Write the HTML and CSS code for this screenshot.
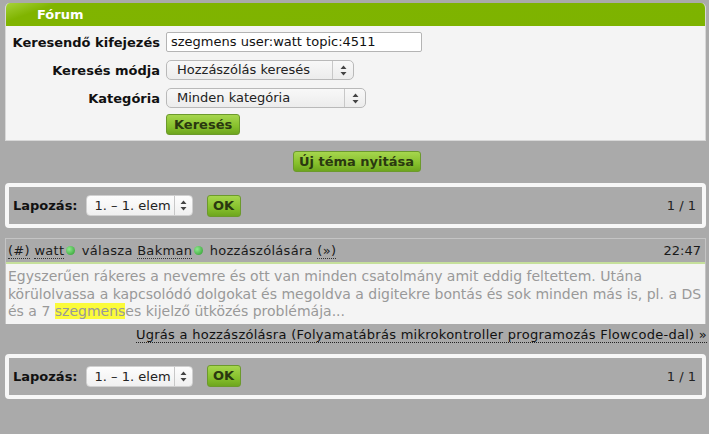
FILE: index.html
```html
<!DOCTYPE html>
<html lang="hu">
<head>
<meta charset="utf-8">
<title>Fórum</title>
<link rel="stylesheet" href="styles.css">
</head>
<body>
<div class="forum">
  <div class="forum-head">Fórum</div>
  <div class="search">
    <label class="lbl">Keresendő kifejezés</label>
    <div class="field"><div class="input">szegmens user:watt topic:4511</div></div>
    <label class="lbl">Keresés módja</label>
    <div class="field"><div class="select sel1"><span class="sel-text">Hozzászólás keresés</span><span class="sel-arrow"><svg width="7" height="11" viewBox="0 0 7 11"><path d="M3.5 0.5 L6.5 4 L0.5 4 Z M0.5 7 L6.5 7 L3.5 10.5 Z" fill="#444"/></svg></span></div></div>
    <label class="lbl">Kategória</label>
    <div class="field"><div class="select sel2"><span class="sel-text">Minden kategória</span><span class="sel-arrow"><svg width="7" height="11" viewBox="0 0 7 11"><path d="M3.5 0.5 L6.5 4 L0.5 4 Z M0.5 7 L6.5 7 L3.5 10.5 Z" fill="#444"/></svg></span></div></div>
    <div></div>
    <div class="field btn-row"><span class="btn">Keresés</span></div>
  </div>
</div>

<div class="actions"><span class="btn btn-new">Új téma nyitása</span></div>

<div class="pager">
  <div class="pager-left">
    <b class="pager-lbl">Lapozás:</b>
    <div class="select psel"><span class="sel-text">1. – 1. elem</span><span class="sel-arrow"><svg width="7" height="11" viewBox="0 0 7 11"><path d="M3.5 0.5 L6.5 4 L0.5 4 Z M0.5 7 L6.5 7 L3.5 10.5 Z" fill="#444"/></svg></span></div>
    <span class="btn btn-ok">OK</span>
  </div>
  <div class="pager-right">1 / 1</div>
</div>

<div class="post">
  <div class="post-head">
    <div class="post-meta"><span class="u">(#)</span> <span class="u">watt</span><span class="dot"></span> válasza <span class="u">Bakman</span><span class="dot"></span> hozzászólására <span class="u">(»)</span></div>
    <div class="post-time">22:47</div>
  </div>
  <div class="post-body">Egyszerűen rákeres a nevemre és ott van minden csatolmány amit eddig feltettem. Utána körülolvassa a kapcsolódó dolgokat és megoldva a digitekre bontás és sok minden más is, pl. a DS és a 7 <span class="hl">szegmens</span>es kijelző ütközés problémája...</div>
</div>
<div class="jump"><span class="jump-link">Ugrás a hozzászólásra (Folyamatábrás mikrokontroller programozás Flowcode-dal) »</span></div>

<div class="pager pager2">
  <div class="pager-left">
    <b class="pager-lbl">Lapozás:</b>
    <div class="select psel"><span class="sel-text">1. – 1. elem</span><span class="sel-arrow"><svg width="7" height="11" viewBox="0 0 7 11"><path d="M3.5 0.5 L6.5 4 L0.5 4 Z M0.5 7 L6.5 7 L3.5 10.5 Z" fill="#444"/></svg></span></div>
    <span class="btn btn-ok">OK</span>
  </div>
  <div class="pager-right">1 / 1</div>
</div>
</body>
</html>
```

FILE: styles.css
```css
html, body {
  margin: 0;
  padding: 0;
}
body {
  background: #aaaaaa;
  font-family: "DejaVu Sans", Verdana, sans-serif;
  font-size: 13px;
  color: #222;
  width: 709px;
  height: 434px;
  overflow: hidden;
}
.forum {
  margin: 3px 3px 0 5px;
  background: #f4f4f4;
  border: 1px solid #d8d8d8;
  border-top: none;
  border-radius: 5px 5px 0 0;
  overflow: hidden;
}
.forum-head {
  height: 23px;
  line-height: 23px;
  background: linear-gradient(160deg, #a6d23a 0px, #80b400 18px, #7db300 100%);
  color: #fff;
  font-weight: bold;
  font-size: 13px;
  padding-left: 31px;
}
.search {
  display: grid;
  grid-template-columns: 154px auto;
  column-gap: 6px;
  row-gap: 8px;
  padding: 6px 0 5px 0;
  align-items: center;
}
.lbl {
  text-align: right;
  font-weight: bold;
  color: #111;
  white-space: nowrap;
}
.field {
  display: flex;
}
.btn-row {
  margin-top: -2px;
}
.input {
  box-sizing: border-box;
  width: 256px;
  height: 20px;
  line-height: 18px;
  padding-left: 4px;
  background: #fff;
  border: 1px solid #b4b4b4;
  border-radius: 2px;
  color: #111;
}
.select {
  box-sizing: border-box;
  height: 20px;
  display: flex;
  align-items: stretch;
  background: linear-gradient(#f8f8f8, #ececec);
  border: 1px solid #b9b9b9;
  border-radius: 5px;
  color: #222;
}
.sel-text {
  flex: 1;
  padding-left: 10px;
  line-height: 18px;
  white-space: nowrap;
}
.sel-arrow {
  width: 20px;
  border-left: 1px solid #c8c8c8;
  display: flex;
  align-items: center;
  justify-content: center;
}
.sel1 { width: 188px; }
.sel2 { width: 200px; }
.btn {
  display: inline-block;
  box-sizing: border-box;
  height: 21px;
  line-height: 19px;
  padding: 0 7px;
  background: linear-gradient(#a6d64e, #86c02c 60%, #6ea61e);
  border: 1px solid #6c9a2c;
  border-radius: 3px;
  color: #2a3810;
  font-weight: bold;
  white-space: nowrap;
}
.actions {
  text-align: center;
  padding: 10px 0 11px 4px;
  height: 21px;
}
.btn-new {
  width: 128px;
  text-align: center;
  padding: 0;
}
.pager {
  margin: 0 3px 0 5px;
  height: 45px;
  box-sizing: border-box;
  border: 4px solid #f7f7f7;
  border-radius: 4px;
  display: flex;
  align-items: center;
  justify-content: space-between;
  padding: 0 6px 0 4px;
}
.pager-left {
  display: flex;
  align-items: center;
}
.pager-lbl {
  color: #111;
  margin-right: 8px;
}
.psel {
  width: 107px;
  height: 21px;
  border: 1px solid #d0d0d0;
  background: linear-gradient(#fdfdfd, #f0f0f0);
  border-radius: 4px;
}
.psel .sel-text {
  padding-left: 8px;
  line-height: 19px;
}
.psel .sel-arrow {
  width: 17px;
}
.btn-ok {
  margin-left: 14px;
  width: 34px;
  height: 22px;
  padding: 0;
  text-align: center;
  line-height: 20px;
}
.pager-right {
  color: #222;
}
.post {
  margin: 10px 3px 0 5px;
  border: 1px solid #c4c4c4;
  border-bottom: none;
}
.post-head {
  height: 23px;
  display: flex;
  align-items: center;
  justify-content: space-between;
  padding: 0 4px 0 2px;
  border-bottom: 2px solid #c6e09c;
  color: #1a1a1a;
}
.post-meta {
  white-space: nowrap;
  letter-spacing: 0.3px;
}
.u {
  border-bottom: 1px dotted #333;
}
.dot {
  display: inline-block;
  width: 9px;
  height: 9px;
  border-radius: 50%;
  background: radial-gradient(circle at 35% 35%, #8ee88e, #2a9a2a);
  margin: 0 2px 0 2px;
  vertical-align: 0px;
}
.post-body {
  background: #f4f4f4;
  color: #999;
  font-size: 14px;
  line-height: 17.5px;
  padding: 4px 0 3px 2px;
}
.hl {
  background: #fbfb3a;
}
.jump {
  text-align: right;
  padding: 2px 2px 0 0;
  height: 28px;
  box-sizing: border-box;
  line-height: 17px;
}
.jump-link {
  color: #111;
  letter-spacing: 0.27px;
  border-bottom: 1px dotted #222;
}
.pager2 {
  margin-top: 2px;
}
```
